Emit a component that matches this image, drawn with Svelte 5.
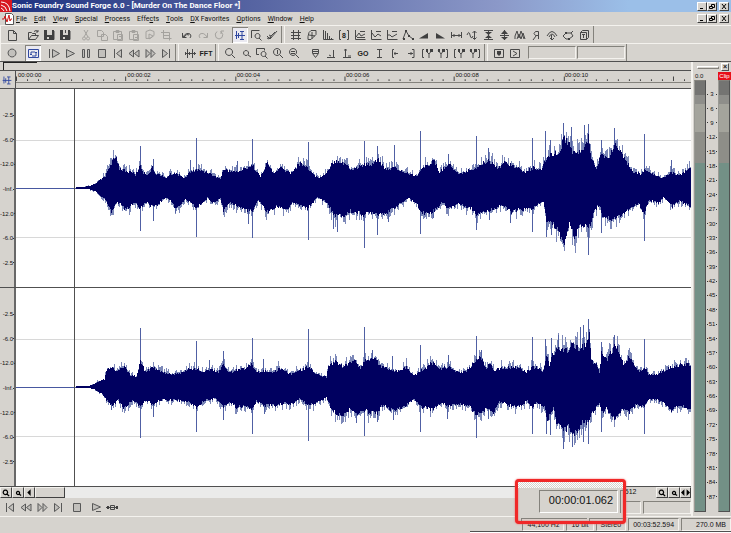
<script lang="ts">
	interface Glyph {
		s?: string;
		f?: string;
		text?: string;
		tone?: 'dim' | 'blue' | 'raised';
	}

	type Point = [x: number, height: number];

	interface Side {
		body: Point[];
		spikes: Point[];
	}

	const glyphs: Record<string, Glyph> = {
		'New': { s: 'M4.5 3.5h5l3 3v7h-8zM9.5 3.5v3h3' },
		'Open': { s: 'M3.5 12.5v-7h3l1 1h3v2M3.5 12.5l3-4h7l-3 4zM9 4.5q2-2 4 0M13 3v2h-2' },
		'Save': { s: 'M4 4v8.5h9V4', f: 'M3 3h3v5h5V3h2v10H3zM6 10v2h2v-2z' },
		'Save As': { s: 'M4 4v8.5h9V4M8.5 3v3', f: 'M3 3h3v5h5V3h2v10H3zM6 10v2h2v-2z' },
		'Cut': { s: 'M6 3l4 7M10 3l-4 7M6 10a1.5 1.5 0 1 0 .1 0M10 10a1.5 1.5 0 1 0 .1 0', tone: 'dim' },
		'Copy': { s: 'M3.5 3.5h4l2 2v4h-6zM7.5 7.5h4l2 2v4h-6z', tone: 'dim' },
		'Paste': { s: 'M3.5 4.5h8v8h-8zM6 3.5h3v2h-3zM7.5 7.5h5v6h-5zM9 9.5h2', tone: 'dim' },
		'Mix': { s: 'M3.5 4.5h8v8h-8zM6 3.5h3v2h-3zM7.5 7.5h5v6h-5zM9 10.5h3', tone: 'dim' },
		'Paste Play': { s: 'M4 4.5q4-3 8 0v4q-3 4-8 3zM7 7l4 2-4 3z', tone: 'dim' },
		'Trim': { s: 'M5.5 3v8.5h8M3 5.5h8.5v8M5 8.5h6', tone: 'dim' },
		'Undo': { s: 'M3.5 6v4.5h4M4 10q3-5 7-3 2 2 0 4M5 10q3-4 5-2' },
		'Redo': { s: 'M12.5 6v4.5h-4M12 10q-3-5-7-3-2 2 0 4', tone: 'dim' },
		'Repeat': { s: 'M10 4.5q3 3 1 6-3 3-6 0-2-4 1-6M10 7V4h3', tone: 'dim' },
		'Edit Tool': { s: 'M3 8.5h10M4.5 4v8M6.5 6v5M8 4.5h4M10 4.5v8M8 12.5h4', tone: 'blue' },
		'Magnify Tool': { s: 'M3.5 11v-7.5h8M9.5 6.5a2.5 2.5 0 1 0 .1 0zM11 11l2.5 2.5' },
		'Pencil Tool': { s: 'M3 9l3 3 7-8M3 11l2 1M5 8l2 1 4-4', f: 'M5 12l1-3 2 1z' },
		'Auto Trim': { s: 'M5.5 3v10M3 5.5h10M10.5 3v10M3 11.5h10M3 8.5h9' },
		'Channel Converter': { s: 'M5 5.5l2-2h5v4l-5 5H4v-3zM5 8l6 1M8 5v7' },
		'DC Offset': { s: 'M3.5 3v9.5h10M5.5 4v9M7.5 6v7M9.5 9v4M11.5 11v2' },
		'Eight Bit': { text: '8', s: 'M5 3.5H3.500v9H5M11 3.5h1.500v9H11' },
		'Graphic EQ': { s: 'M3.5 3v9.5h10M4 10l3-4 2 3 4-2M8 4.5h5M5 10.5h8' },
		'Paragraphic EQ': { s: 'M3.5 3v9.5h10M4 6l3 4 3-3 3 2M8 4.5h5' },
		'Parametric EQ': { s: 'M3.5 3v9.5h10M4 8h2l2 2 5-3M8 4.5h5' },
		'Envelope': { s: 'M3 12l3-8 3 5 4 3', f: 'M5 3h2v2H5zM8 8h2v2H8zM12 11h2v2h-2zM3 11h2v2H3z' },
		'Fade In': { f: 'M3 11.5L12 6v5.5z' },
		'Fade Out': { f: 'M4 6l9 5.5H4z' },
		'Insert Silence': { s: 'M3.5 5v6M13.5 5v6M3 8.5h10M6 7v3M11 7v3' },
		'Invert': { s: 'M3 8q2-5 3 0t3 1M10.5 4v8M8.5 6l2-2 2 2M8.5 10.5l2 2 2-2' },
		'Mute': { s: 'M4 3.5h9M4 12.5h9M8.5 4v8', f: 'M5 5h7L8.500 8zM5 11h7L8.500 8z' },
		'Normalize': { s: 'M4 8.5h9M8.5 3v10', f: 'M5 7h7L8.5 3zM5 10h7l-3.5 3z' },
		'Resample': { s: 'M3 12V9l2-5 2 7 2-7 3 8M5 12l2-5 2 5 2-6 2 6' },
		'Reverse': { s: 'M10.5 12V4.5h-3q-3 2 0 4h3M8 9l-3 4' },
		'Smooth': { s: 'M3 9q5-9 10 0M5 10q3-6 6 0M7.5 8v5M6 11l2 2 2-2' },
		'Time Stretch': { s: 'M3 9l3-3h5l2 3-4 3H6zM11 6l2-2', f: 'M5 5h2v2H5zM8 11h2v2H8z' },
		'Plug-In Chainer': { s: 'M4.5 5.5l2-2h6v7l-2 2h-6zM4.5 5.5h6v7M6 7.5h3M7.5 8v3' },
		'Record': { s: 'M8 4a4 4 0 1 0 .1 0z', tone: 'raised' },
		'Loop Playback': { s: 'M3.5 4.5h10v8h-10zM6 10V7h4M11 8v3H7M5 9l1 1 1-1M10 8l1-1 1 1', tone: 'blue' },
		'Play All': { s: 'M3.5 4v9M6.5 4.5v8l7-4z', tone: 'raised' },
		'Play': { s: 'M4.5 4.5v8l8-4z', tone: 'raised' },
		'Pause': { s: 'M4.5 4.5h2v8h-2zM9.5 4.5h2v8h-2z', tone: 'raised' },
		'Stop': { s: 'M4.5 4.5h7v8h-7z', tone: 'raised' },
		'Go to Start': { s: 'M4.5 4v9M11.5 4.5v8l-5-4z', tone: 'raised' },
		'Rewind': { s: 'M7.5 5v7l-4.500-3.500zM13 5v7l-4.5-3.5z', tone: 'raised' },
		'Forward': { s: 'M4 4.5l4 4-4 4zM9 4.5l4 4-4 4z', tone: 'raised' },
		'Go to End': { s: 'M11.5 4v9M4.5 4.5v8l5-4z', tone: 'raised' },
		'Mixer': { s: 'M5.5 4v9M10.5 4v9M3 8.5h11M3.500 7v3M7.500 7v3M12.500 7v3' },
		'FFT': { text: 'FFT' },
		'Zoom In': { s: 'M7 3.5a3.5 3.5 0 1 0 .1 0zM10 10l3 3' },
		'Zoom Out': { s: 'M8 5.5a2.5 2.5 0 1 0 .1 0zM10 10l3 2' },
		'Zoom Selection': { s: 'M5 9.5H2.500v-6h8v2M9.5 6.5a2.500 2.500 0 1 0 .1 0zM11 11l2.500 2.500' },
		'Zoom Normal': { s: 'M7 3.5a3.5 3.5 0 1 0 .1 0zM10 10l3 3M7.5 5v4' },
		'Zoom Full': { s: 'M7 3.5a3.5 3.5 0 1 0 .1 0zM10 10l3 3M5 6.5h4M5 8.5h4' },
		'Drop Marker': { s: 'M5.5 4.5h6v4l-3 4-3-4zM6 6.5h5M6 8.5h5' },
		'Mark In': { s: 'M4 12.5h8M10.5 5v7M6 10l2 1' },
		'Mark Out': { s: 'M4 12.5h8M6.5 4v8M5 5h3M9 11h3' },
		'Go To': { text: 'GO' },
		'Cursor Center': { s: 'M6 4.5h5M8.5 5v7M6 12.5h5' },
		'Selection Start': { s: 'M7 4.5H5.5v8H7M7 8.5h4M8 7v3' },
		'Selection End': { s: 'M9 4.5h2v8H9M5 8.5h5M8 7v3' },
		'Mark Start': { s: 'M5 4.500H3.5v8H5M7 6l3 3 3-4M10 9v4', f: 'M7 4h2v3H7zM11 4h3v3h-3z' },
		'Mark End': { s: 'M11 4.500h1.500v8H11M3 5l3 4 3-4M6 9v4', f: 'M3 4h2v3H3zM7 4h3v3H7z' },
		'Region List': { s: 'M3.5 4.5h9v8h-9z', f: 'M6 6h4v3L8 11 6 9z' },
		'Playlist': { s: 'M3.5 4.5h9v8h-9zM6 6l4 2.5L6 11' },
		'Script': { s: 'M4.5 4.5v7l8-3.500zM8 12.5h5', tone: 'raised' },
		'Scrub': { s: 'M2 8.5h12M6.5 6.5h4v4h-4z', f: 'M3 7h2v3H3zM12 7h2v3h-2z' }
	};

	const topBar = [
		['New'],
		['Open', 'Save', 'Save As'],
		['Cut', 'Copy', 'Paste', 'Mix', 'Paste Play', 'Trim'],
		['Undo', 'Redo', 'Repeat'],
		['Edit Tool', 'Magnify Tool', 'Pencil Tool']
	];
	const processBar = [
		'Auto Trim', 'Channel Converter', 'DC Offset', 'Eight Bit', 'Graphic EQ', 'Paragraphic EQ', 'Parametric EQ',
		'Envelope', 'Fade In', 'Fade Out', 'Insert Silence', 'Invert', 'Mute', 'Normalize', 'Resample', 'Reverse',
		'Smooth', 'Time Stretch', 'Plug-In Chainer'
	];
	const transportBar = [
		['Record'],
		['Loop Playback'],
		['Play All', 'Play', 'Pause', 'Stop', 'Go to Start', 'Rewind', 'Forward', 'Go to End']
	];
	const zoomBar = ['Zoom In', 'Zoom Out', 'Zoom Selection', 'Zoom Normal', 'Zoom Full'];
	const markerBar = [
		'Drop Marker', 'Mark In', 'Mark Out', 'Go To', 'Cursor Center', 'Selection Start', 'Selection End',
		'Mark Start', 'Mark End', 'Mark Start', 'Mark End'
	];
	const pressed = ['Edit Tool', 'Loop Playback'];

	// label and index of the mnemonic letter
	const menus: [string, number][] = [
		['File', 0], ['Edit', 0], ['View', 0], ['Special', 0], ['Process', 0], ['Effects', 4],
		['Tools', 0], ['DX Favorites', 0], ['Options', 0], ['Window', 0], ['Help', 0]
	];

	const times = ['00:00:00', '00:00:02', '00:00:04', '00:00:06', '00:00:08', '00:00:10'];
	const levels = ['-2.5', '-6.0', '-12.0', '-Inf.', '-12.0', '-6.0', '-2.5'];
	const meterMarks = Array.from({ length: 29 }, (_, i) => (i + 1) * 3);

	const START = 16;
	const WIDTH = 674;
	const MID = 99;

	const channels: { name: string; up: Side; down: Side }[] = [
		{
			name: 'Left channel',
			up: {
				body: [[75, 0], [88, 2], [95, 5], [100, 9], [105, 13], [108, 22], [110, 24], [113, 30], [116, 33], [119, 22], [127, 17], [131, 18], [135, 14], [140, 25], [143, 16], [148, 15], [152, 22], [155, 16], [160, 14], [165, 11], [170, 15], [175, 16], [180, 14], [184, 10], [188, 16], [196, 20], [207, 17], [220, 10], [223, 20], [237, 17], [252, 25], [260, 12], [267, 27], [273, 16], [280, 22], [290, 16], [300, 27], [307, 22], [317, 11], [325, 15], [332, 28], [337, 30], [345, 26], [350, 20], [357, 23], [363, 25], [370, 26], [377, 32], [383, 20], [393, 22], [403, 17], [415, 13], [420, 20], [427, 26], [433, 29], [438, 17], [447, 27], [457, 15], [467, 19], [475, 22], [487, 30], [497, 22], [503, 28], [510, 26], [523, 17], [532, 22], [540, 19], [545, 32], [550, 38], [557, 36], [562, 54], [567, 50], [570, 40], [577, 38], [583, 42], [587, 57], [590, 33], [595, 22], [600, 38], [607, 31], [613, 48], [617, 42], [623, 31], [632, 18], [640, 15], [643, 20], [652, 15], [662, 11], [670, 17], [678, 14], [690, 22]],
				spikes: [[140, 42], [153, 29], [190, 28], [196, 50], [237, 27], [252, 49], [308, 46], [363, 47], [376, 42], [393, 43], [419, 57], [447, 34], [475, 52], [487, 40], [531, 50], [544, 57], [549, 48], [562, 65], [570, 61], [583, 63], [587, 64], [600, 48], [613, 60], [643, 54], [670, 28]]
			},
			down: {
				body: [[75, 0], [88, 1], [95, 4], [100, 8], [105, 13], [108, 20], [111, 27], [115, 16], [120, 17], [125, 23], [130, 20], [135, 15], [140, 22], [145, 16], [150, 19], [156, 20], [160, 15], [165, 10], [170, 13], [175, 22], [180, 18], [185, 13], [190, 16], [196, 22], [207, 11], [212, 16], [220, 11], [223, 25], [230, 16], [240, 21], [252, 26], [258, 13], [267, 26], [277, 20], [287, 23], [293, 16], [307, 22], [317, 10], [327, 16], [333, 29], [343, 31], [350, 25], [363, 29], [370, 26], [377, 28], [387, 26], [397, 18], [408, 11], [415, 17], [420, 26], [427, 28], [437, 21], [440, 15], [447, 22], [457, 17], [470, 22], [475, 29], [480, 25], [488, 25], [500, 18], [510, 26], [517, 24], [532, 22], [542, 14], [545, 37], [550, 38], [557, 45], [560, 57], [564, 58], [568, 35], [572, 53], [577, 44], [583, 40], [588, 43], [593, 24], [598, 18], [601, 30], [610, 34], [617, 31], [627, 24], [637, 17], [643, 28], [647, 14], [657, 16], [662, 10], [671, 20], [678, 14], [690, 20]],
				spikes: [[140, 43], [153, 33], [175, 25], [196, 49], [248, 36], [252, 50], [308, 52], [333, 41], [337, 44], [363, 60], [376, 47], [387, 34], [419, 46], [432, 30], [475, 42], [488, 32], [509, 35], [531, 44], [545, 49], [550, 47], [587, 67], [600, 45], [643, 53]]
			}
		},
		{
			name: 'Right channel',
			up: {
				body: [[75, 0], [88, 1], [95, 4], [100, 7], [104, 8], [106, 18], [110, 22], [116, 17], [124, 23], [130, 13], [136, 11], [140, 28], [145, 17], [153, 21], [165, 15], [175, 14], [182, 16], [188, 20], [196, 20], [203, 17], [210, 19], [218, 16], [223, 24], [229, 16], [240, 19], [252, 24], [256, 16], [263, 18], [270, 15], [280, 20], [290, 14], [300, 18], [307, 22], [318, 13], [326, 11], [328, 22], [335, 28], [342, 22], [354, 28], [359, 20], [363, 29], [372, 31], [380, 23], [390, 18], [400, 17], [405, 22], [412, 12], [419, 17], [430, 26], [440, 20], [448, 22], [455, 16], [465, 17], [475, 30], [480, 32], [485, 20], [488, 26], [493, 18], [502, 21], [518, 21], [525, 16], [531, 22], [542, 18], [545, 35], [548, 24], [551, 34], [557, 44], [565, 39], [570, 46], [577, 41], [583, 44], [588, 56], [590, 29], [595, 25], [598, 16], [600, 36], [605, 29], [613, 43], [617, 40], [622, 24], [628, 32], [635, 20], [640, 16], [643, 22], [647, 14], [653, 13], [662, 17], [670, 22], [680, 24], [690, 25]],
				spikes: [[140, 59], [196, 46], [209, 27], [223, 36], [252, 49], [263, 28], [308, 58], [363, 60], [371, 37], [391, 31], [419, 42], [447, 32], [475, 51], [480, 37], [531, 50], [544, 48], [550, 49], [557, 52], [579, 60], [582, 62], [587, 68], [600, 45], [613, 52], [643, 48]]
			},
			down: {
				body: [[75, 0], [88, 1], [95, 3], [103, 9], [106, 14], [112, 20], [118, 14], [124, 24], [132, 14], [140, 21], [146, 14], [153, 20], [160, 14], [175, 14], [188, 16], [196, 22], [205, 14], [215, 12], [223, 21], [229, 16], [236, 22], [247, 21], [252, 25], [256, 15], [264, 20], [275, 20], [285, 17], [290, 19], [300, 13], [307, 19], [315, 18], [326, 11], [330, 22], [337, 29], [345, 30], [350, 22], [355, 30], [363, 26], [370, 27], [376, 28], [380, 20], [393, 26], [405, 20], [412, 13], [419, 21], [430, 25], [440, 17], [446, 20], [460, 19], [467, 19], [475, 31], [480, 26], [487, 24], [492, 27], [498, 16], [510, 21], [520, 21], [525, 14], [531, 23], [535, 16], [543, 21], [546, 36], [552, 22], [555, 38], [562, 48], [567, 44], [572, 50], [577, 46], [582, 37], [587, 40], [590, 29], [598, 17], [601, 27], [605, 24], [613, 34], [622, 24], [628, 27], [635, 19], [643, 21], [647, 14], [653, 13], [662, 17], [670, 25], [680, 19], [687, 26], [690, 24]],
				spikes: [[111, 23], [140, 51], [153, 30], [196, 45], [223, 33], [264, 27], [252, 47], [308, 54], [355, 36], [363, 49], [376, 35], [392, 33], [419, 45], [446, 32], [475, 51], [487, 32], [531, 47], [545, 47], [549, 48], [562, 62], [571, 60], [582, 55], [587, 57], [600, 45], [643, 47]]
			}
		}
	];

	// repeatable noise, so the trace keeps its shape between renders
	function noise(n: number) {
		const v = Math.sin(n * 12.9898) * 43758.5453;
		return v - Math.floor(v);
	}

	function heightAt(body: Point[], x: number) {
		const i = body.findIndex((p) => p[0] >= x);
		if (i <= 0) return i === 0 ? body[0][1] : body[body.length - 1][1];
		const [x0, h0] = body[i - 1];
		const [x1, h1] = body[i];
		return h0 + ((h1 - h0) * (x - x0)) / (x1 - x0);
	}

	function trace({ body, spikes }: Side, dir: number, seed: number) {
		let core = '';
		let edge = '';
		for (let x = 76; x < START + WIDTH; x++) {
			const h = heightAt(body, x);
			const solid = Math.max(1, Math.round(h - noise(x + seed) * h * 0.16));
			const r = noise(x * 3 + seed);
			const faint = Math.round(solid + r * r * h * 0.35);
			core += `M${x - START + 0.5} ${MID}v${dir * solid}`;
			edge += `M${x - START + 0.5} ${MID}v${dir * faint}`;
		}
		const peaks = spikes.map(([x, h]) => `M${x - START + 0.5} ${MID}v${dir * h}`).join('');
		return { core, edge, peaks };
	}

	const waves = channels.map((c, i) => ({
		name: c.name,
		sides: [trace(c.up, -1, i * 911), trace(c.down, 1, i * 911 + 404)]
	}));

	const ticks = Array.from({ length: 62 }, (_, i) => `M${Math.round(i * 10.93) + 0.5} 11v${i % 10 ? -2 : -5}`).join('');
</script>

{#snippet icon(name: string)}
	{@const g = glyphs[name]}
	<svg class="icon" data-tone={g.tone} viewBox="0 0 16 16" aria-hidden="true">
		{#if g.s}<path class="line" d={g.s} />{/if}
		{#if g.f}<path class="solid" d={g.f} />{/if}
		{#if g.text}<text x="8" y="11" text-anchor="middle">{g.text}</text>{/if}
	</svg>
{/snippet}

{#snippet group(names: string[])}
	<div class="group">
		{#each names as name, i (i)}
			<button class="tool" class:pressed={pressed.includes(name)} aria-label={name}>{@render icon(name)}</button>
		{/each}
	</div>
{/snippet}

{#snippet windowButtons(target: string)}
	<div class="window-buttons">
		<button aria-label="Minimize {target}"><svg viewBox="0 0 8 7"><path d="M2 5.5h3" /></svg></button>
		<button aria-label="Restore {target}"><svg viewBox="0 0 8 7"><path d="M3.5 3V1.5h3v3H5M1.5 3.500h3v2h-3z" /></svg></button>
		<button class="close" aria-label="Close {target}"><svg viewBox="0 0 8 7"><path d="M2 1l4 5M6 1l-4 5" /></svg></button>
	</div>
{/snippet}

<div class="app">
	<header class="title">
		<svg class="logo" viewBox="0 0 12 12" aria-hidden="true">
			<rect width="12" height="12" />
			<path d="M1 2q8 0 9 9M1 5q5 1 6 6M1 8q2 1 3 3" />
		</svg>
		<h1>Sonic Foundry Sound Forge 6.0 - [Murder On The Dance Floor *]</h1>
		{@render windowButtons('application')}
	</header>

	<nav class="menu">
		<svg class="doc" viewBox="0 0 12 12" aria-hidden="true">
			<path class="page" d="M3.5.5h6l2 2v9h-8z" />
			<path class="sound" d="M0 6h2l1-3 2 6 2-7 1 6 1-2h1" />
		</svg>
		{#each menus as [label, key] (label)}
			<button>{label.slice(0, key)}<u>{label[key]}</u>{label.slice(key + 1)}</button>
		{/each}
		{@render windowButtons('document')}
	</nav>

	<div class="toolbars">
		<div class="row">
			<div class="bar">
				{#each topBar as names, i (i)}{@render group(names)}{/each}
			</div>
			<div class="bar">{@render group(processBar)}</div>
		</div>
		<div class="row">
			<div class="bar">
				{#each transportBar as names, i (i)}{@render group(names)}{/each}
			</div>
			<div class="bar">{@render group(['Mixer', 'FFT'])}</div>
			<div class="bar">{@render group(zoomBar)}{@render group(markerBar)}</div>
			<div class="bar">
				{@render group(['Region List', 'Playlist'])}
				<output class="well"></output>
				<output class="well"></output>
			</div>
		</div>
	</div>

	<div class="work">
		<main class="editor">
			<div class="overview"><span></span></div>
			<div class="ruler">
				<button class="corner" aria-label="Edit tool">{@render icon('Edit Tool')}</button>
				<div class="timeline">
					<div class="times">
						{#each times as t (t)}<span>{t}</span>{/each}
					</div>
					<svg viewBox="0 0 674 12" preserveAspectRatio="none" aria-hidden="true"><path d={ticks} /></svg>
				</div>
			</div>
			{#each waves as wave (wave.name)}
				<section class="channel" aria-label={wave.name}>
					<ol class="levels">
						{#each levels as level, i (i)}<li>{level}</li>{/each}
					</ol>
					<div class="plot">
						<svg viewBox="0 0 674 198" preserveAspectRatio="none" aria-hidden="true">
							<path class="grid" d="M0 51h674M0 148.5h674" />
							<path class="silence" d="M0 99.5h60" />
							{#each wave.sides as side, i (i)}
								<path class="edge" d={side.edge} />
								<path class="peaks" d={side.peaks} />
								<path class="core" d={side.core} />
							{/each}
							<path class="cursor" d="M58.5 0v198" />
						</svg>
					</div>
				</section>
			{/each}
			<div class="scroll">
				<button aria-label="Zoom in level">{@render icon('Zoom In')}</button>
				<button aria-label="Zoom out level">{@render icon('Zoom Out')}</button>
				<button class="arrow" aria-label="Scroll left"><svg viewBox="0 0 8 8"><path d="M5 1v6L2 4z" /></svg></button>
				<div class="thumb"></div>
				<div class="rail"></div>
				<output class="ratio">1:512</output>
				<button aria-label="Zoom in time">{@render icon('Zoom In')}</button>
				<button aria-label="Zoom out time">{@render icon('Zoom Out')}</button>
				<button class="arrow" aria-label="Zoom range"><svg viewBox="0 0 8 8"><path d="M3 1v6L0 4zM5 1v6l3-3z" /></svg></button>
			</div>
			<div class="play">
				{@render group(['Go to Start', 'Rewind', 'Forward', 'Go to End'])}
				{@render group(['Stop'])}
				{@render group(['Script', 'Scrub'])}
				<div class="wells">
					<output class="well short"></output>
					<output class="well"></output>
				</div>
			</div>
		</main>

		<aside class="meters">
			<div class="handle"><span></span><button aria-label="Close meters">×</button></div>
			<div class="peaks-row"><span>0.0</span><span class="clip">Clip</span></div>
			<div class="meter-body">
				<div class="meter"></div>
				<ol class="marks">
					{#each meterMarks as m (m)}<li>{m}</li>{/each}
				</ol>
				<div class="meter"></div>
			</div>
		</aside>
	</div>

	<footer class="status">
		<span>44,100 Hz</span>
		<span>16 bit</span>
		<span>Stereo</span>
		<span>00:03:52.594</span>
		<span class="disk">270.0 MB</span>
	</footer>
	<div class="edge-line"></div>

	<div class="callout">
		<div class="callout-top"></div>
		<div class="callout-main"><output>00:00:01.062</output><i></i></div>
		<div class="callout-foot"><i></i><i></i></div>
	</div>
</div>

<style>
	:global(body) {
		margin: 0;
	}

	.app {
		--face: #d6d3ce;
		--shade: #84827c;
		--dark: #505050;
		--light: #f4f2ee;
		position: relative;
		display: flex;
		flex-direction: column;
		min-height: 100vh;
		background: var(--face);
		color: #111;
		font: 7px/10px 'Liberation Sans', Arial, sans-serif;
		overflow: hidden;
	}

	button {
		padding: 0;
		border: 0;
		background: none;
		color: inherit;
		font: inherit;
	}

	svg {
		display: block;
	}

	ol {
		margin: 0;
		padding: 0;
		list-style: none;
	}

	.title {
		display: flex;
		align-items: center;
		height: 12px;
		padding-right: 2px;
		background: linear-gradient(90deg, #1c3180, #52609f 32%, #8b98c8 68%, #9bbfe8 86%);
	}

	.title h1 {
		flex: 1;
		margin: 0;
		color: #fff;
		font: bold 8px/12px Roboto, sans-serif;
		white-space: nowrap;
	}

	.logo {
		width: 12px;
		height: 12px;
	}

	.logo rect {
		fill: #d81820;
	}

	.logo path {
		fill: none;
		stroke: #fff;
	}

	.window-buttons {
		display: flex;
		margin-left: auto;
	}

	.window-buttons button {
		width: 10px;
		height: 9px;
		box-sizing: border-box;
		border: 1px solid;
		border-color: #fff #404040 #404040 #fff;
		background: var(--face);
	}

	.window-buttons .close {
		margin-left: 2px;
	}

	.window-buttons svg {
		width: 8px;
		height: 7px;
	}

	.window-buttons path {
		fill: none;
		stroke: #000;
	}

	.menu {
		display: flex;
		align-items: center;
		gap: 7px;
		height: 13px;
		padding: 0 2px;
		font: 7px/12px Roboto, sans-serif;
	}

	.doc {
		width: 12px;
		height: 12px;
		margin-right: -5px;
	}

	.doc .page {
		fill: #fff;
		stroke: #555;
	}

	.doc .sound {
		fill: none;
		stroke: #d01818;
	}

	.row {
		display: flex;
		gap: 2px;
		height: 18px;
		box-sizing: border-box;
		border-top: 1px solid var(--light);
	}

	.bar {
		display: flex;
		align-items: center;
		gap: 5px;
		padding: 0 1px 0 3px;
		border-left: 1px solid var(--light);
		border-right: 1px solid var(--shade);
	}

	.group {
		display: flex;
	}

	.tool {
		width: 16px;
		height: 16px;
	}

	.pressed {
		background: #eae9f0;
		box-shadow: inset 1px 1px var(--shade), inset -1px -1px #fff;
	}

	.icon {
		width: 16px;
		height: 16px;
	}

	.line {
		fill: none;
		stroke: #484848;
	}

	.solid {
		fill: #404040;
	}

	.icon text {
		fill: #222;
		font: bold 7px 'Liberation Sans', Arial, sans-serif;
	}

	[data-tone='dim'] .line {
		stroke: #a4a29e;
	}

	[data-tone='blue'] .line {
		stroke: #3048a0;
	}

	[data-tone='raised'] .line {
		fill: #c2c0bc;
		stroke: #585858;
	}

	.well {
		width: 48px;
		height: 13px;
		box-sizing: border-box;
		border: 1px solid;
		border-color: var(--shade) var(--light) var(--light) var(--shade);
	}

	.bar .well + .well {
		margin-left: -4px;
	}

	.well.short {
		width: 20px;
	}

	.work {
		display: flex;
		flex: 1;
		border-top: 1px solid var(--dark);
	}

	.editor {
		display: flex;
		flex: 1;
		flex-direction: column;
		min-width: 0;
		border-right: 2px solid var(--light);
	}

	.overview {
		height: 8px;
		border-bottom: 1px solid var(--dark);
	}

	.overview span {
		display: block;
		width: 33px;
		height: 7px;
		margin-left: 3px;
		border-top: 1px solid #222;
		border-left: 1px solid #222;
	}

	.ruler {
		display: flex;
		height: 17px;
		border-bottom: 1px solid var(--dark);
	}

	.corner {
		width: 16px;
		box-sizing: border-box;
		border-right: 1px solid var(--dark);
	}

	.corner .icon {
		width: 14px;
		height: 14px;
	}

	.timeline {
		position: relative;
		flex: 1;
		min-width: 0;
		overflow: hidden;
	}

	.times {
		display: flex;
		font-size: 6px;
		line-height: 8px;
	}

	.times span {
		flex: 0 0 16.2%;
		box-sizing: border-box;
		padding-left: 2px;
	}

	.timeline svg {
		position: absolute;
		top: 0;
		width: 100%;
		height: 12px;
		border-bottom: 1px solid var(--shade);
		box-sizing: border-box;
	}

	.timeline path {
		stroke: #444;
	}

	.channel {
		display: flex;
		flex: 1;
		border-bottom: 1px solid var(--dark);
	}

	.levels {
		display: flex;
		flex-direction: column;
		width: 16px;
		box-sizing: border-box;
		padding: 14px 0 12px;
		border-right: 2px solid #686868;
		font-size: 6px;
		text-align: right;
	}

	.levels li {
		display: flex;
		flex: 1;
		align-items: center;
		justify-content: flex-end;
	}

	.levels li::after {
		content: '';
		width: 1px;
		height: 1px;
		background: #333;
	}

	.plot {
		position: relative;
		flex: 1;
		background: #fff;
	}

	.plot svg {
		position: absolute;
		inset: 0;
		width: 100%;
		height: 100%;
		shape-rendering: crispEdges;
	}

	.grid {
		stroke: #d8d8d8;
	}

	.silence {
		stroke: #4858a0;
	}

	.edge {
		stroke: #7c88b8;
	}

	.peaks {
		stroke: #5060a4;
	}

	.core {
		stroke: #000060;
	}

	.cursor {
		stroke: #505050;
	}

	.scroll {
		display: flex;
		height: 11px;
		background: #ebebea;
	}

	.scroll button,
	.thumb {
		width: 12px;
		box-sizing: border-box;
		border: 1px solid;
		border-color: var(--light) #404040 #404040 var(--light);
		background: var(--face);
	}

	.scroll .icon {
		width: 10px;
		height: 10px;
	}

	.scroll .line {
		stroke: #000;
		stroke-width: 2px;
	}

	.scroll .arrow {
		width: 11px;
	}

	.arrow path {
		fill: #000;
	}

	.scroll .thumb {
		width: 30px;
	}

	.rail {
		flex: 1;
	}

	.ratio {
		width: 37px;
		background: var(--face);
	}

	.play {
		display: flex;
		align-items: center;
		gap: 3px;
		height: 18px;
		padding-left: 2px;
	}

	.wells {
		display: flex;
		gap: 2px;
		margin-left: auto;
	}

	.meters {
		display: flex;
		flex-direction: column;
		width: 38px;
		padding-bottom: 4px;
	}

	.handle {
		display: flex;
		align-items: center;
		gap: 2px;
		height: 10px;
		padding: 0 2px 0 4px;
	}

	.handle span {
		flex: 1;
		height: 1px;
		border: 1px solid;
		border-color: #fff var(--shade) var(--shade) #fff;
	}

	.handle button {
		width: 8px;
		height: 8px;
		border: 1px solid;
		border-color: #fff var(--dark) var(--dark) #fff;
		box-sizing: border-box;
		font-weight: bold;
		line-height: 6px;
	}

	.peaks-row {
		display: flex;
		justify-content: space-between;
		height: 8px;
		padding-left: 2px;
		font-size: 6px;
		line-height: 8px;
	}

	.clip {
		width: 13px;
		background: #e81018;
		color: #fff;
		text-align: center;
	}

	.meter-body {
		display: flex;
		flex: 1;
		padding: 0 1px;
	}

	.meter {
		width: 12px;
		box-sizing: border-box;
		border: 1px solid;
		border-color: var(--shade) var(--dark) var(--dark) #9a9a94;
		background: linear-gradient(#747472 14px, #8e8e8a 14px 23px, #a4a49c 23px 51px, #8e8e88 51px 82px, #739086 82px);
	}

	.marks {
		display: flex;
		flex: 1;
		flex-direction: column;
		padding: 7px 1px 8px;
		font-size: 6px;
	}

	.marks li {
		display: flex;
		flex: 1;
		align-items: center;
		justify-content: space-between;
		line-height: 8px;
	}

	.marks li::before,
	.marks li::after {
		content: '';
		width: 1px;
		height: 1px;
		background: #333;
	}

	.status {
		display: flex;
		justify-content: flex-end;
		gap: 2px;
		padding-top: 1px;
		border-top: 1px solid var(--light);
	}

	.status span {
		height: 13px;
		box-sizing: border-box;
		padding: 0 4px;
		border: 1px solid;
		border-color: var(--shade) var(--light) var(--light) var(--shade);
		line-height: 12px;
	}

	.status .disk {
		padding-left: 14px;
	}

	.edge-line {
		height: 1px;
		margin-left: 470px;
		border-top: 1px solid var(--dark);
		background: #fff;
	}

	.callout {
		position: absolute;
		right: 105px;
		bottom: 9px;
		display: flex;
		flex-direction: column;
		width: 105px;
		height: 39px;
		border: 3px solid #f02828;
		border-radius: 4px;
		background: var(--face);
		box-shadow: 0 0 2px #f06060, inset 0 0 2px #f06060;
	}

	.callout-top {
		height: 6px;
		background: repeating-conic-gradient(#fff 0 25%, #d6d3ce 0 50%) 0 0 / 2px 2px;
	}

	.callout-main {
		display: flex;
		flex: 1;
		justify-content: flex-end;
		gap: 2px;
		padding: 2px 0 5px;
	}

	.callout-main output {
		padding: 0 4px 0 9px;
		border: 1px solid;
		border-color: var(--shade) #fff #fff var(--shade);
		font-size: 11px;
		line-height: 19px;
	}

	.callout-main i {
		width: 2px;
		border-top: 1px solid var(--shade);
		border-left: 1px solid var(--shade);
	}

	.callout-foot {
		display: flex;
		gap: 2px;
		height: 3px;
		padding-left: 3px;
	}

	.callout-foot i {
		flex: 2;
		border-top: 1px solid var(--shade);
		border-left: 1px solid var(--shade);
	}

	.callout-foot i + i {
		flex: 1;
	}
</style>
